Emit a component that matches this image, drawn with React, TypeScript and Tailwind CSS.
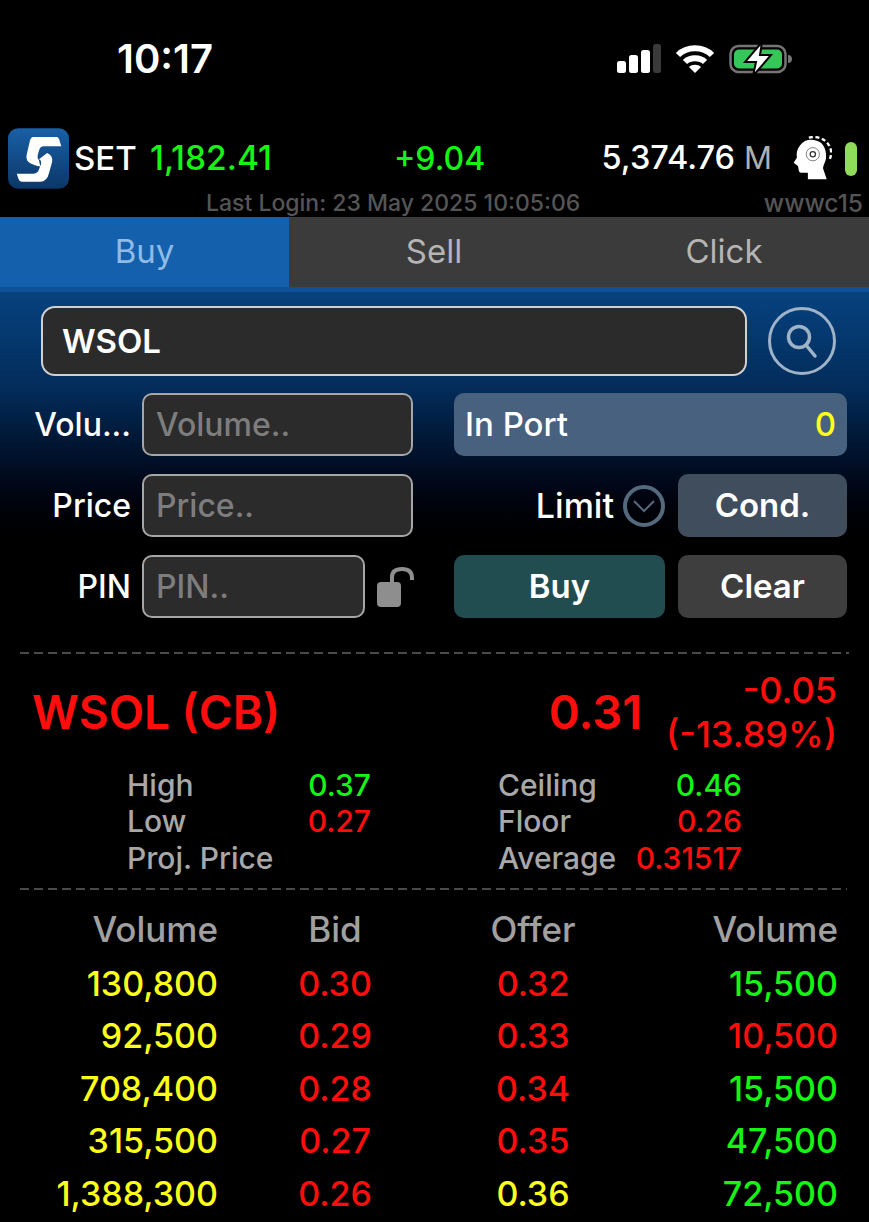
import React from "react";

const Signal = () => (
  <svg width="44" height="30" viewBox="0 0 44 30">
    <rect x="0" y="17" width="9" height="12" rx="2.5" fill="#fff" />
    <rect x="12" y="11" width="9" height="18" rx="2.5" fill="#fff" />
    <rect x="24" y="6" width="9" height="23" rx="2.5" fill="#fff" />
    <rect x="36" y="0" width="8" height="29" rx="2.5" fill="#3a3a3a" />
  </svg>
);
const Wifi = () => (
  <svg width="40" height="30" viewBox="0 0 40 30" fill="none" stroke="#fff" strokeWidth="6">
    <path d="M3 11 C12 2 28 2 37 11" />
    <path d="M10 18 C15 13 25 13 30 18" />
    <path d="M14 23 L20 29 L26 23 C23 20 17 20 14 23 Z" fill="#fff" stroke="none" />
  </svg>
);
const Battery = () => (
  <svg width="64" height="34" viewBox="0 0 64 34">
    <rect x="1.5" y="4" width="55" height="26" rx="8" fill="none" stroke="#757575" strokeWidth="2.5" />
    <rect x="5" y="7.5" width="48" height="19" rx="5" fill="#35c759" />
    <path d="M59 13 C62 13 63 15 63 17 C63 19 62 21 59 21 Z" fill="#757575" />
    <path d="M33 0 L16 20 L27 20 L24 34 L42 13 L31 13 Z" fill="#fff" stroke="#000" strokeWidth="2" />
  </svg>
);
const Logo = () => (
  <svg width="61" height="61" viewBox="24 28 181 180" className="shrink-0">
    <defs>
      <linearGradient id="lg" x1="0" y1="0" x2="0" y2="1">
        <stop offset="0" stopColor="#1a5fa6" />
        <stop offset="1" stopColor="#0b3768" />
      </linearGradient>
    </defs>
    <rect x="24" y="28" width="181" height="180" rx="30" fill="url(#lg)" />
    <path d="M98 54 L168 54 Q175 54 178 68 L182 82 L130 82 Q120 82 116 94 L112 108 Q110 118 116 124 L120 142 Q95 138 84 128 Q76 120 80 104 L88 70 Q90 56 98 54 Z" fill="#fff" />
    <path d="M140 102 Q158 110 155 128 L146 160 Q140 186 120 187 L66 187 Q58 187 55 178 L50 163 L100 163 Q112 163 116 150 L122 134 Q124 124 116 120 Z" fill="#fff" />
  </svg>
);
const Head = () => (
  <svg width="39" height="45" viewBox="40 28 118 134">
    <path d="M73 44 C85 36 108 36 122 46 C136 56 141 75 140 92 C139 106 131 115 131 125 L142 158 L85 158 L85 138 L65 138 C55 138 58 125 55 118 L42 108 L52 92 C48 70 60 53 73 44 Z" fill="#fff" />
    <circle cx="100" cy="82" r="20" fill="none" stroke="#666" strokeWidth="2.5" />
    <circle cx="100" cy="82" r="8" fill="none" stroke="#333" strokeWidth="4" />
    <path d="M88 32 C120 24 150 42 155 72 C156 82 154 92 150 100" fill="none" stroke="#fff" strokeWidth="7" strokeDasharray="12 8" />
  </svg>
);
const Search = () => (
  <div className="flex h-[68px] w-[68px] items-center justify-center rounded-full border-[3px] border-[#9fb3c8]">
    <svg width="36" height="36" viewBox="0 0 36 36" fill="none" stroke="#9fb3c8" strokeWidth="3.5">
      <circle cx="15" cy="14" r="10.5" />
      <path d="M22 22 L31 33" strokeLinecap="round" />
    </svg>
  </div>
);
const Chevron = () => (
  <div className="flex h-[42px] w-[42px] items-center justify-center rounded-full border-[4px] border-[#55697d]">
    <svg width="24" height="16" viewBox="0 0 24 16" fill="none" stroke="#55697d" strokeWidth="2">
      <path d="M2 3 L12 13 L22 3" />
    </svg>
  </div>
);
const Lock = () => (
  <svg width="38" height="40" viewBox="0 0 38 40" className="shrink-0">
    <rect x="0" y="15" width="24" height="25" rx="4" fill="#8e8e8e" />
    <path d="M15 16 L15 10 C15 5 18 2 25 2 C32 2 35 5 35 11 L35 13" fill="none" stroke="#8e8e8e" strokeWidth="4" />
  </svg>
);

const Field = ({ placeholder, className }: { placeholder: string; className: string }) => (
  <div className={`flex h-[63px] items-center rounded-[10px] border-2 border-[#a6a6a6] bg-[#2b2b2b] pl-[12px] text-[32px] font-medium text-[#7d7d7d] ${className}`}>
    {placeholder}
  </div>
);
const Label = ({ children }: { children: React.ReactNode }) => (
  <div className="w-[131px] shrink-0 text-right text-[32px] font-medium text-white">{children}</div>
);
const Stat = ({ label, value, color }: { label: string; value?: string; color?: string }) => (
  <div className="flex h-[36.5px] w-full items-center justify-between">
    <span className="text-[#a8a8a8]">{label}</span>
    {value && <span className={color}>{value}</span>}
  </div>
);
const Dashed = ({ className }: { className: string }) => (
  <div className={`h-[2px] bg-[repeating-linear-gradient(90deg,#4a4a4a_0,#4a4a4a_9px,transparent_9px,transparent_14px)] ${className}`} />
);

const G = "text-[#14f514]";
const R = "text-[#ff0d0d]";
const Y = "text-[#ffff1a]";
const rows = [
  ["130,800", "0.30", R, "0.32", R, "15,500", G],
  ["92,500", "0.29", R, "0.33", R, "10,500", R],
  ["708,400", "0.28", R, "0.34", R, "15,500", G],
  ["315,500", "0.27", R, "0.35", R, "47,500", G],
  ["1,388,300", "0.26", R, "0.36", Y, "72,500", G],
];

export default function App() {
  return (
    <div className="h-[1222px] w-[869px] overflow-hidden bg-black font-['Inter','Liberation_Sans',sans-serif] text-white">
      {/* status bar */}
      <div className="flex h-[128px] items-start justify-between pl-[117px] pr-[76px] pt-[36px]">
        <div className="text-[40px] font-semibold leading-[46px]">10:17</div>
        <div className="flex items-center gap-[14px] pt-[6px]">
          <Signal />
          <Wifi />
          <Battery />
        </div>
      </div>

      {/* market header */}
      <div className="flex h-[61px] items-center pl-[8px] pr-[12px]">
        <Logo />
        <span className="ml-[5px] w-[76px] text-[33px] font-medium">SET</span>
        <span className={`w-[244px] text-[33.5px] font-medium ${G}`}>1,182.41</span>
        <span className={`w-[120px] text-[32px] font-medium ${G}`}>+9.04</span>
        <span className="ml-auto text-[32.5px] font-medium">5,374.76</span>
        <span className="ml-[9px] text-[31px] text-[#b0b0b0]">M</span>
        <span className="ml-[21px]"><Head /></span>
        <div className="ml-[13px] h-[34px] w-[12px] rounded-full bg-[#8fdc5a]" />
      </div>
      <div className="flex h-[28px] items-center justify-between pl-[206px] pr-[6px] font-medium text-[#555]">
        <span className="text-[23px]">Last Login: 23 May 2025 10:05:06</span>
        <span className="text-[24.5px]">wwwc15</span>
      </div>

      {/* tabs */}
      <div className="flex h-[70px] text-[33px] text-[#b5b5b5]">
        <div className="flex w-[289px] items-center justify-center bg-[#1560ad] text-[#8fbbe6]">Buy</div>
        <div className="flex flex-1 items-center bg-[#3b3b3b]">
          <div className="flex-1 text-center">Sell</div>
          <div className="flex-1 text-center">Click</div>
        </div>
      </div>

      {/* order form */}
      <div className="h-[365px] border-t-[5px] border-[#0d4f98] bg-gradient-to-b from-[#07427f] via-[#022c5a] via-27% to-black to-75% px-[22px] pt-[14px]">
        <div className="flex items-center pl-[19px]">
          <div className="flex h-[70px] w-[706px] items-center rounded-[14px] border-2 border-[#d0d0d0] bg-[#2b2b2b] pl-[19px] pt-[2px] text-[33px] font-semibold">WSOL</div>
          <div className="ml-[21px]"><Search /></div>
        </div>

        <div className="mt-[17px] flex flex-col gap-[18px]">
          <div className="flex items-center">
            <div className="-ml-[22px] flex items-center"><Label>Volu...</Label></div>
            <Field placeholder="Volume.." className="ml-[11px] w-[271px]" />
            <div className="ml-[41px] flex h-[63px] w-[393px] items-center justify-between rounded-[10px] bg-[#47617f] px-[11px] text-[33px] font-medium">
              <span>In Port</span>
              <span className="text-[#ffff1a]">0</span>
            </div>
          </div>
          <div className="flex items-center">
            <div className="-ml-[22px] flex items-center"><Label>Price</Label></div>
            <Field placeholder="Price.." className="ml-[11px] w-[271px]" />
            <div className="ml-[41px] flex w-[211px] items-center justify-end gap-[9px] text-[34px] font-medium">
              <span>Limit</span>
              <Chevron />
            </div>
            <div className="ml-[13px] flex h-[63px] w-[169px] items-center justify-center rounded-[10px] bg-[#3f4d5c] text-[33px] font-semibold">Cond.</div>
          </div>
          <div className="flex items-center">
            <div className="-ml-[22px] flex items-center"><Label>PIN</Label></div>
            <Field placeholder="PIN.." className="ml-[11px] w-[223px]" />
            <div className="ml-[12px] w-[36px]"><Lock /></div>
            <div className="ml-[41px] flex h-[63px] w-[211px] items-center justify-center rounded-[10px] bg-[#214c50] text-[33px] font-semibold">Buy</div>
            <div className="ml-[13px] flex h-[63px] w-[169px] items-center justify-center rounded-[10px] bg-[#3e3e3e] text-[33px] font-semibold">Clear</div>
          </div>
        </div>
      </div>

      {/* quote */}
      <Dashed className="mx-[20px]" />
      <div className={`flex h-[113px] items-center pl-[32px] pr-[32px] pt-[3px] ${R}`}>
        <span className="text-[46px] font-semibold">WSOL (CB)</span>
        <span className="ml-auto text-[47px] font-semibold">0.31</span>
        <div className="ml-[24px] w-[171px] text-right text-[36px] font-medium leading-[44px]">
          <div>-0.05</div>
          <div>(-13.89%)</div>
        </div>
      </div>

      <div className="flex h-[121px] pl-[127px] text-[30px] font-medium">
        <div className="w-[244px]">
          <Stat label="High" value="0.37" color={G} />
          <Stat label="Low" value="0.27" color={R} />
          <Stat label="Proj. Price" />
        </div>
        <div className="ml-[127px] w-[244px]">
          <Stat label="Ceiling" value="0.46" color={G} />
          <Stat label="Floor" value="0.26" color={R} />
          <Stat label="Average" value="0.31517" color={R} />
        </div>
      </div>

      <Dashed className="ml-[20px] mr-[22px]" />

      {/* bid/offer table */}
      <div className="pr-[31px] pt-[13px] text-[34px] font-medium">
        <div className="mb-[2px] grid h-[52px] grid-cols-[218px_234px_162px_1fr] items-center text-[35px] text-[#a0a0a0]">
          <div className="text-right">Volume</div>
          <div className="text-center">Bid</div>
          <div className="text-center">Offer</div>
          <div className="text-right">Volume</div>
        </div>
        {rows.map((r) => (
          <div key={r[0]} className="grid h-[52.5px] grid-cols-[218px_234px_162px_1fr] items-center">
            <div className={`text-right ${Y}`}>{r[0]}</div>
            <div className={`text-center ${r[2]}`}>{r[1]}</div>
            <div className={`text-center ${r[4]}`}>{r[3]}</div>
            <div className={`text-right ${r[6]}`}>{r[5]}</div>
          </div>
        ))}
      </div>
    </div>
  );
}
